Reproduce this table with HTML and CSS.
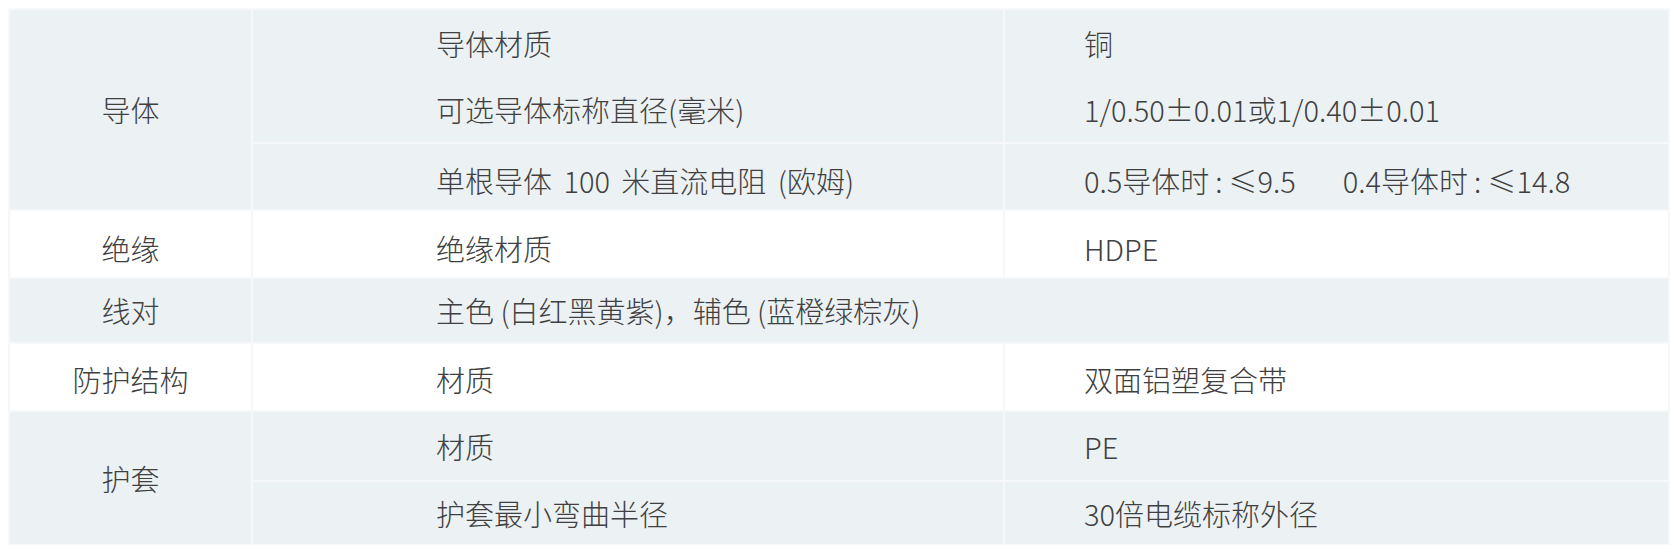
FILE: index.html
```html
<!DOCTYPE html>
<html lang="zh-CN">
<head>
<meta charset="utf-8">
<title>规格参数</title>
<link rel="stylesheet" href="styles.css">
</head>
<body>
<table class="spec">
  <colgroup><col class="c1"><col class="c2"><col class="c3"></colgroup>
  <tbody class="shade">
    <tr class="r1"><th rowspan="3">导体</th><td class="v2">导体材质</td><td class="v3">铜</td></tr>
    <tr class="r2"><td class="v2">可选导体标称直径(毫米)</td><td class="v3">1/0.50±0.01或1/0.40±0.01</td></tr>
    <tr class="r3"><td class="v2 spaced">单根导体 100 米直流电阻 (欧姆)</td><td class="v3">0.5导体时<span class="colon">:</span>≤9.5<span class="gap"></span>0.4导体时<span class="colon">:</span>≤14.8</td></tr>
  </tbody>
  <tbody class="plain">
    <tr class="r4"><th>绝缘</th><td class="v2">绝缘材质</td><td class="v3">HDPE</td></tr>
  </tbody>
  <tbody class="shade">
    <tr class="r5"><th>线对</th><td class="v2" colspan="2">主色 (白红黑黄紫)，辅色 (蓝橙绿棕灰)</td></tr>
  </tbody>
  <tbody class="plain">
    <tr class="r6"><th>防护结构</th><td class="v2">材质</td><td class="v3">双面铝塑复合带</td></tr>
  </tbody>
  <tbody class="shade">
    <tr class="r7"><th rowspan="2">护套</th><td class="v2">材质</td><td class="v3">PE</td></tr>
    <tr class="r8"><td class="v2">护套最小弯曲半径</td><td class="v3">30倍电缆标称外径</td></tr>
  </tbody>
</table>
</body>
</html>
```

FILE: styles.css
```css
html, body {
  margin: 0;
  padding: 0;
  background: #ffffff;
}

body {
  padding: 8px;
  font-family: "Noto Sans CJK SC Light", "Noto Sans CJK SC", "Noto Sans", sans-serif;
  font-weight: 300;
  color: #404040;
}

.spec {
  width: 1660px;
  border-collapse: collapse;
  table-layout: fixed;
  font-size: 29px;
  line-height: 1.2;
}

.c1 { width: 243px; }
.c2 { width: 752px; }
.c3 { width: 665px; }

.spec th,
.spec td {
  border: 2px solid #f6f8f9;
  padding: 0;
  vertical-align: middle;
  white-space: nowrap;
}

.spec th {
  font-weight: 300;
  text-align: center;
}

.spec .v2 {
  text-align: left;
  padding-left: 183px;
}

.spec .v3 {
  text-align: left;
  padding-left: 79px;
}

.spec .spaced {
  word-spacing: 5px;
}

.shade th,
.shade td {
  background: #ecf1f4;
}

.shade .r1 td { border-bottom: hidden; }
.shade .r2 td { border-top: hidden; }

.plain th,
.plain td {
  background: #ffffff;
}

.r1 { height: 68px; }
.r2 { height: 66px; }
.r3 { height: 67px; }
.r3 td { padding-top: 7px; }
.r4 { height: 68px; }
.r4 th, .r4 td { padding-top: 9px; }
.r5 { height: 65px; }
.r6 { height: 68px; }
.r6 th, .r6 td { padding-top: 4px; }
.r7 { height: 70px; }
.r8 { height: 64px; }

.colon {
  display: inline-block;
  margin: 0 6px;
}

.gap {
  display: inline-block;
  width: 47px;
}
```
